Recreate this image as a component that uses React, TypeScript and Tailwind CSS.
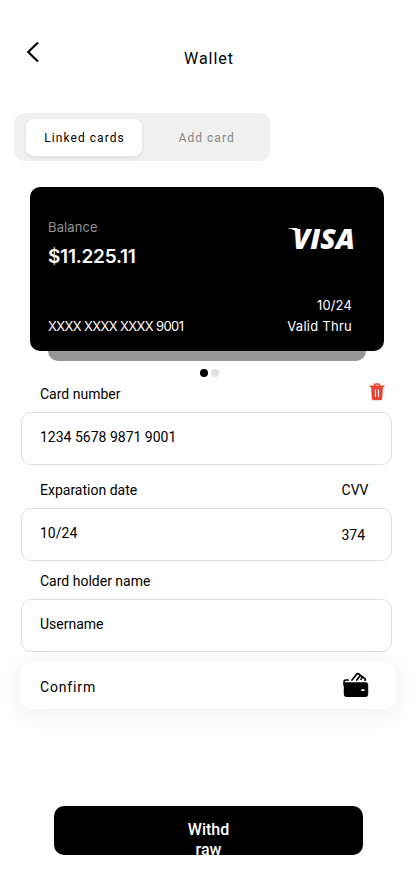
import React from "react";

function BackIcon() {
  return (
    <svg width="14" height="22" viewBox="0 0 14 22" fill="none" stroke="#000" strokeWidth="2.1">
      <path d="M13 1.5L3.2 11L13 20.5" />
    </svg>
  );
}

function VisaLogo() {
  return (
    <svg width="68" height="30" viewBox="0 0 68 30" fill="#fff" overflow="visible">
      <path d="M2 2.9H11L13.5 10C11 6.3 7 4 2 3.3Z" />
      <text
        x="6.8"
        y="23.6"
        fontSize="28.5"
        textLength="62"
        lengthAdjust="spacingAndGlyphs"
        className="font-['Open_Sans',sans-serif] font-extrabold italic"
      >
        VISA
      </text>
    </svg>
  );
}

function TrashIcon() {
  return (
    <svg width="16" height="18" viewBox="0 0 16 18" fill="none">
      <path d="M5.3 3V2.4C5.3 1.5 5.9 1 6.7 1H9.3C10.1 1 10.7 1.5 10.7 2.4V3" stroke="#ea4335" strokeWidth="1.4" />
      <path d="M1 3.3H15" stroke="#ea4335" strokeWidth="1.5" strokeLinecap="round" />
      <path d="M2 3.3H14L13.2 15.6Q13.1 17.2 11.7 17.2H4.3Q2.9 17.2 2.8 15.6Z" fill="#ea4335" />
      <path d="M6.5 6.9V13.4M9.5 6.9V13.4" stroke="#fff" strokeWidth="1.1" strokeLinecap="round" />
    </svg>
  );
}

function WalletIcon() {
  return (
    <svg width="26" height="26" viewBox="0 0 26 26" fill="none" stroke="#000" strokeWidth="1.7" strokeLinecap="round" strokeLinejoin="round">
      <path d="M5.2 8H2.8C1.5 8 1.1 8.8 1.1 9.7V13" />
      <path d="M9 8L13.6 2.2Q14.5 1.1 15.7 2L21.6 6.4Q22.7 7.3 22 8.3" />
      <path d="M13.8 8L17.2 3.8M18 7.2L19.2 5.6" />
      <path d="M.8 9.7Q1.5 10.2 3 10.2H22.4Q25.2 10.2 25.2 13V22Q25.2 25 22.2 25H3.8Q.8 25 .8 22Z" fill="#000" stroke="none" />
      <path d="M19 18.2H20.8" stroke="#fff" strokeWidth="1.7" />
    </svg>
  );
}

function FieldBox({ children }: { children: React.ReactNode }) {
  return (
    <div className="ml-[21px] flex h-[53px] w-[371px] items-start justify-between rounded-[10px] border border-[#dedede] pl-[18px] pt-[14px]">
      {children}
    </div>
  );
}

export default function App() {
  return (
    <main className="h-[895px] w-[417px] overflow-hidden bg-white font-[Roboto,sans-serif] text-sm text-black">
      <header className="flex h-[113px] items-start pl-[25px] pt-[41px]">
        <button aria-label="Back"><BackIcon /></button>
        <h1 className="ml-[145px] mt-[6px] text-base leading-6 tracking-[0.96px]">Wallet</h1>
      </header>

      <nav className="ml-[14px] flex h-12 w-64 rounded-[10px] bg-[#f0f0f0] pl-3 pt-[6px] text-xs tracking-[1.05px]">
        <button className="h-[37px] w-[116px] rounded-lg bg-white pl-px shadow-[0_2px_4px_rgba(0,0,0,0.08)]">Linked cards</button>
        <button className="ml-[36px] h-[37px] pl-[0.5px] text-[#868686]">Add card</button>
      </nav>

      <section className="ml-[30px] mt-[26px] w-[354px] font-[Inter,sans-serif]">
        <div className="flex h-[164px] justify-between rounded-[10px] bg-black pl-[18px] pr-[30px] text-white">
          <div className="flex flex-col items-start">
            <p className="mt-[30px] text-[13px] leading-5 tracking-[0.12px] text-[#929292]">Balance</p>
            <p className="mt-[6px] text-[19px] font-semibold leading-7 tracking-[-0.25px]">$11.225.11</p>
            <p className="mt-[45px] whitespace-nowrap text-[13px] leading-5 tracking-[-0.62px]">XXXX XXXX XXXX 9001</p>
          </div>
          <div className="flex flex-col items-end pt-[38px]">
            <VisaLogo />
            <p className="mr-[2px] mt-10 text-[13px] leading-5 tracking-[0.15px]">10/24</p>
            <p className="mr-[2px] mt-px text-[13px] leading-5 tracking-[0.25px]">Valid Thru</p>
          </div>
        </div>
        <div className="ml-[18px] h-[10px] w-[318px] rounded-b-[10px] bg-[#969696]" />
      </section>
      <div className="ml-[199.5px] mt-[7.5px] flex h-[8.5px] gap-[3px]">
        <span className="size-2 rounded-full bg-black" />
        <span className="size-2 rounded-full bg-[#e0e0e0]" />
      </div>

      <div className="flex h-[35px] items-start justify-between pl-10 pr-[32px] pt-[7px]">
        <label className="leading-5">Card number</label>
        <span className="-mt-px"><TrashIcon /></span>
      </div>
      <FieldBox><span className="leading-5">1234 5678 9871 9001</span></FieldBox>

      <div className="flex h-[43px] items-start justify-between pl-10 pr-[48.5px] pt-[15px]">
        <label className="leading-5">Exparation date</label>
        <label className="leading-5">CVV</label>
      </div>
      <FieldBox>
        <span className="leading-5">10/24</span>
        <span className="mr-[26px] mt-[2px] leading-5">374</span>
      </FieldBox>

      <div className="h-[38px] pl-10 pt-[10px]"><label className="leading-5">Card holder name</label></div>
      <FieldBox><span className="leading-5">Username</span></FieldBox>

      <button className="relative ml-[21px] mt-[10px] flex h-[47px] w-[374px] items-center justify-between rounded-[10px] bg-white pl-[19px] pr-[26px] shadow-[0_4px_30px_rgba(0,0,0,0.07)]">
        <span className="mt-[3px] leading-5 tracking-[0.84px]">Confirm</span>
        <span className="-mt-[2px]"><WalletIcon /></span>
      </button>

      <button className="ml-[54px] mt-[97px] flex h-[49px] w-[309px] items-start justify-center overflow-hidden rounded-[10px] bg-black pt-[14px] text-base font-medium leading-5 text-white">
        <span className="w-[50px] break-words">Withd<br />raw</span>
      </button>
    </main>
  );
}
